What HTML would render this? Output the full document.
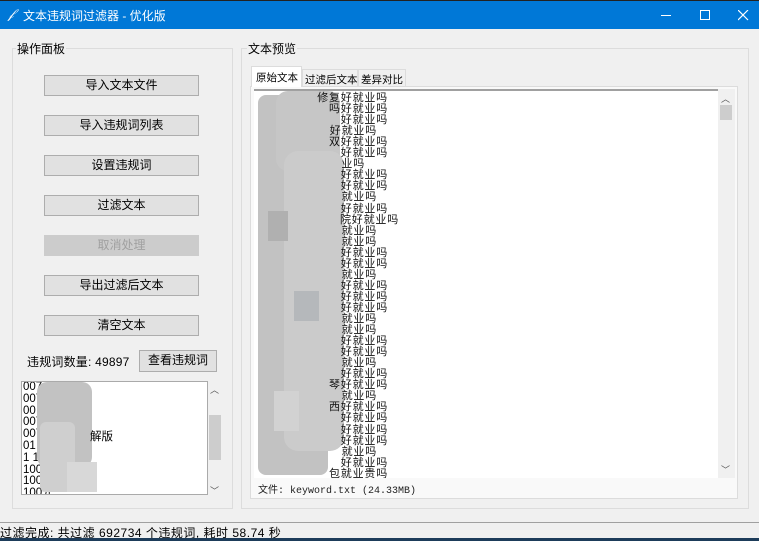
<!DOCTYPE html><html><head><meta charset="utf-8"><style>
*{margin:0;padding:0;box-sizing:border-box}
body{width:759px;height:541px;background:#f0f0f0;position:relative;overflow:hidden;font-family:"Liberation Sans","Noto Sans CJK SC",sans-serif;font-size:12px;color:#000}
.a{position:absolute}
.btn{position:absolute;left:44px;width:155px;height:21px;background:#e1e1e1;border:1px solid #adadad;text-align:center;line-height:19px;font-size:12px}
.frame{position:absolute;border:1px solid #dcdcdc}
.lbl{position:absolute;background:#f0f0f0;padding:0 1px;font-size:12px}
.ln{position:absolute;right:0;font-size:11px;letter-spacing:0.8px;line-height:11px;white-space:nowrap;color:#111;text-align:right}
.tab{position:absolute;font-size:10.5px;white-space:nowrap;overflow:hidden}
</style></head><body>
<div class="a" style="left:0;top:0;width:759px;height:1px;background:#222"></div>
<div class="a" style="left:0;top:1px;width:759px;height:28px;background:#0078d7;color:#fff">
<span class="a" style="left:8px;top:5px;font-size:13px;font-style:italic">𝒻</span>
<span class="a" style="left:23px;top:6px;font-size:12px">文本违规词过滤器 - 优化版</span>
<div class="a" style="left:661px;top:14px;width:10px;height:1px;background:#fff"></div>
<div class="a" style="left:700px;top:9px;width:10px;height:10px;border:1px solid #fff"></div>
<svg class="a" style="left:738px;top:9px" width="11" height="11"><path d="M0 0L10 10M10 0L0 10" stroke="#fff" stroke-width="1.2"/></svg>
</div>
<div class="frame" style="left:12px;top:48px;width:221px;height:461px"></div>
<div class="lbl" style="left:16px;top:40px">操作面板</div>
<div class="btn" style="top:75px">导入文本文件</div>
<div class="btn" style="top:115px">导入违规词列表</div>
<div class="btn" style="top:155px">设置违规词</div>
<div class="btn" style="top:195px">过滤文本</div>
<div class="btn" style="top:235px;background:#cccccc;border-color:#cccccc;color:#a0a0a0">取消处理</div>
<div class="btn" style="top:275px">导出过滤后文本</div>
<div class="btn" style="top:315px">清空文本</div>
<div class="a" style="left:27px;top:353px;font-size:12px;letter-spacing:0.2px">违规词数量: 49897</div>
<div class="btn" style="left:139px;top:350px;width:78px;height:22px">查看违规词</div>
<div class="a" style="left:21px;top:381px;width:187px;height:114px;background:#fff;border:1px solid #aaa;overflow:hidden">
<div style="font-size:11.5px;line-height:11.8px;padding-left:1px">007<br>007<br>00<br>007<br>007<br>01<br>1 1<br>100<br>100<br>100元</div>
<div class="a" style="left:15px;top:0;width:55px;height:85px;background:#c2c2c2;border-radius:10px"></div>
<div class="a" style="left:18px;top:40px;width:35px;height:70px;background:#cfcfcf;border-radius:6px"></div>
<div class="a" style="left:45px;top:80px;width:30px;height:30px;background:#d8d8d8"></div>
<span class="a" style="left:68px;top:46px;font-size:11.5px">解版</span>
</div>
<div class="a" style="left:208px;top:381px;width:15px;height:114px;background:#f0f0f0"></div>
<div class="a" style="left:209px;top:415px;width:12px;height:45px;background:#cdcdcd"></div>
<div class="a" style="left:210px;top:383px;font-size:9px;color:#555">︿</div>
<div class="a" style="left:210px;top:484px;font-size:9px;color:#555">﹀</div>

<div class="frame" style="left:241px;top:48px;width:508px;height:461px"></div>
<div class="lbl" style="left:247px;top:40px">文本预览</div>
<div class="a" style="left:250px;top:86px;width:488px;height:413px;border:1px solid #dcdcdc;background:#f9f9f9"></div>
<div class="tab" style="left:251px;top:66px;width:51px;height:21px;background:#fff;border:1px solid #dcdcdc;border-bottom:none;padding:3px 0 0 4px">原始文本</div>
<div class="tab" style="left:302px;top:69px;width:56px;height:18px;background:#f0f0f0;border:1px solid #dcdcdc;padding:2px 0 0 2px">过滤后文本</div>
<div class="tab" style="left:358px;top:69px;width:48px;height:18px;background:#f0f0f0;border:1px solid #dcdcdc;padding:2px 0 0 2px">差异对比</div>
<div class="a" style="left:254px;top:89px;width:464px;height:389px;background:#fff;border-top:2px solid #a0a0a0;overflow:hidden" id="t">
<div class="a" style="left:4px;top:4px;width:70px;height:380px;background:#c2c2c2;border-radius:8px"></div>
<div class="a" style="left:22px;top:0px;width:64px;height:80px;background:#c6c6c6;border-radius:12px"></div>
<div class="a" style="left:30px;top:60px;width:60px;height:300px;background:#cbcbcb;border-radius:14px"></div>
<div class="a" style="left:14px;top:120px;width:20px;height:30px;background:#b0b0b0"></div>
<div class="a" style="left:40px;top:200px;width:25px;height:30px;background:#b5b8bb"></div>
<div class="a" style="left:20px;top:300px;width:25px;height:40px;background:#d2d2d2"></div>
</div>
<div class="a" style="left:718px;top:89px;width:17px;height:389px;background:#f0f0f0"></div>
<div class="a" style="left:720px;top:105px;width:12px;height:15px;background:#cdcdcd"></div>
<div class="a" style="left:721px;top:92px;font-size:9px;color:#555">︿</div>
<div class="a" style="left:721px;top:463px;font-size:9px;color:#555">﹀</div>
<div class="a" style="left:258px;top:481px;font-family:'Liberation Mono','Noto Sans CJK SC',monospace;font-size:10px;color:#222">文件: keyword.txt (24.33MB)</div>

<div class="a" style="left:0;top:522px;width:759px;height:1px;background:#a0a0a0"></div>
<div class="a" style="left:0;top:524px;font-size:12px;letter-spacing:0.5px">过滤完成: 共过滤 692734 个违规词, 耗时 58.74 秒</div>
<div class="a" style="left:0;top:538px;width:759px;height:3px;background:#1d3c5a"></div>
<script>
var L=[["修复好就业吗",388],["吗好就业吗",388],["好就业吗",388],["好就业吗",377],["双好就业吗",388],["好就业吗",388],["业吗",365],["好就业吗",388],["好就业吗",388],["就业吗",377],["好就业吗",388],["院好就业吗",399],["就业吗",377],["就业吗",377],["好就业吗",388],["好就业吗",388],["就业吗",377],["好就业吗",388],["好就业吗",388],["好就业吗",388],["就业吗",377],["就业吗",377],["好就业吗",388],["好就业吗",388],["就业吗",377],["好就业吗",388],["琴好就业吗",388],["就业吗",377],["西好就业吗",388],["好就业吗",388],["好就业吗",388],["好就业吗",388],["就业吗",377],["好就业吗",388],["包就业贵吗",388]];
var t=document.getElementById('t'),h='';
L.forEach(function(l,i){h+='<div class="ln" style="right:'+(464-(l[1]-254))+'px;top:'+(2+i*11.05)+'px">'+l[0]+'</div>';});
t.insertAdjacentHTML('beforeend',h);
</script>
</body></html>
